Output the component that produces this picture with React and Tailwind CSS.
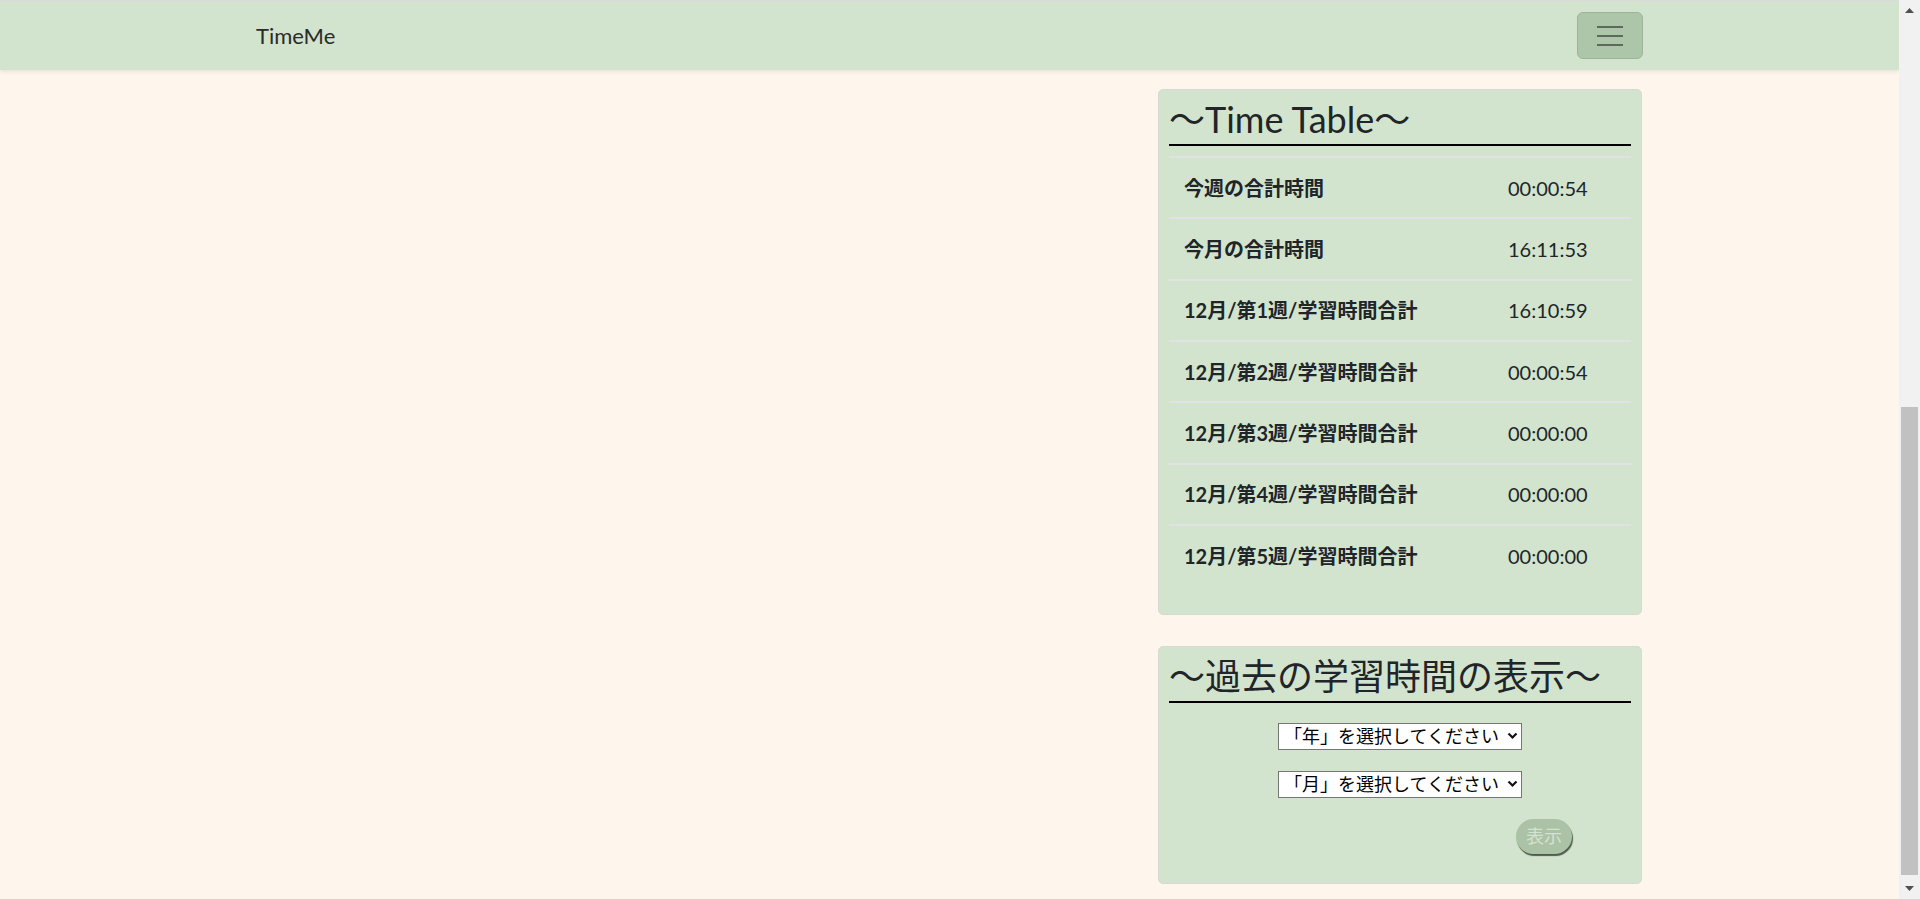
import React from "react";

const rows = [
  { label: "今週の合計時間", value: "00:00:54" },
  { label: "今月の合計時間", value: "16:11:53" },
  { label: "12月/第1週/学習時間合計", value: "16:10:59" },
  { label: "12月/第2週/学習時間合計", value: "00:00:54" },
  { label: "12月/第3週/学習時間合計", value: "00:00:00" },
  { label: "12月/第4週/学習時間合計", value: "00:00:00" },
  { label: "12月/第5週/学習時間合計", value: "00:00:00" },
];

function Scrollbar() {
  return (
    <div className="w-[21px] h-full bg-[#f1f1f1] flex flex-col">
      <div className="h-[21px] flex items-center justify-center">
        <svg width="9" height="5" viewBox="0 0 9 5">
          <polygon points="4.5,0 9,5 0,5" fill="#505050" />
        </svg>
      </div>
      <div className="flex-1 flex flex-col pt-[386px] pb-[3px] px-[2px]">
        <div className="flex-1 bg-[#c1c1c1]" />
      </div>
      <div className="h-[21px] flex items-center justify-center">
        <svg width="9" height="5" viewBox="0 0 9 5">
          <polygon points="0,0 9,0 4.5,5" fill="#505050" />
        </svg>
      </div>
    </div>
  );
}

function Picker({ label }) {
  return (
    <div className="relative w-[244px] h-[27px]">
      <select className="appearance-none w-full h-full pl-[5px] pr-[20px] text-[18px] leading-[25px] bg-white text-black border border-[#767676]">
        <option>{label}</option>
      </select>
      <svg
        className="absolute right-[4px] top-[9px] pointer-events-none"
        width="11"
        height="8"
        viewBox="0 0 11 8"
      >
        <polyline points="1.5,1.5 5.5,5.5 9.5,1.5" fill="none" stroke="#111" strokeWidth="2.2" />
      </svg>
    </div>
  );
}

function App() {
  return (
    <div className="h-screen flex overflow-hidden bg-[#fef5ed] text-[#212529] font-['Lato','Noto_Sans_CJK_JP',sans-serif]">
      <div className="flex-1 flex flex-col">
        <nav className="h-[70px] shrink-0 bg-[#d2e4cd] border-t border-[#dadada] shadow-[0_2px_4px_rgba(0,0,0,0.08)] flex items-center justify-between pl-[256px] pr-[256px]">
          <span className="text-[22px] text-[#2b2b2b]">TimeMe</span>
          <button className="w-[66px] h-[47px] rounded-[6px] bg-[#adc5a8] border border-[#9db597] flex flex-col items-center justify-center gap-[7px]">
            <span className="w-[26px] h-[2px] bg-[#5c6b59]" />
            <span className="w-[26px] h-[2px] bg-[#5c6b59]" />
            <span className="w-[26px] h-[2px] bg-[#5c6b59]" />
          </button>
        </nav>

        <main className="flex-1 flex justify-end pr-[257px] pt-[19px]">
          <div className="w-[484px] flex flex-col gap-[31px]">
            <section className="h-[526px] bg-[#d2e4cd] border border-[#d5dbd2] rounded-[5px] p-[10px]">
              <h2 className="text-[36px] leading-[38px] pb-[6px] border-b-2 border-black">
                〜Time Table〜
              </h2>
              <div className="mt-[10px]">
                {rows.map((r) => (
                  <div
                    key={r.label}
                    className="h-[61.33px] grid grid-cols-[339px_1fr] items-center border-t-2 border-[#dfe3e4]"
                  >
                    <span className="pl-[15px] text-[20px] font-bold">{r.label}</span>
                    <span className="text-[20px]">{r.value}</span>
                  </div>
                ))}
              </div>
            </section>

            <section className="h-[238px] bg-[#d2e4cd] border border-[#d5dbd2] rounded-[5px] p-[10px] flex flex-col">
              <h2 className="text-[36px] leading-[38px] pb-[6px] border-b-2 border-black">
                〜過去の学習時間の表示〜
              </h2>
              <div className="flex flex-col items-center gap-[21px] mt-[20px]">
                <Picker label="「年」を選択してください" />
                <Picker label="「月」を選択してください" />
              </div>
              <button className="self-end mr-[59px] mt-[21px] w-[56px] h-[35px] rounded-full bg-[#abc2a6] text-[#d3e3ce] text-[18px] shadow-[1px_2px_1px_#4f5a4d]">
                表示
              </button>
            </section>
          </div>
        </main>
      </div>
      <Scrollbar />
    </div>
  );
}

export default App;
